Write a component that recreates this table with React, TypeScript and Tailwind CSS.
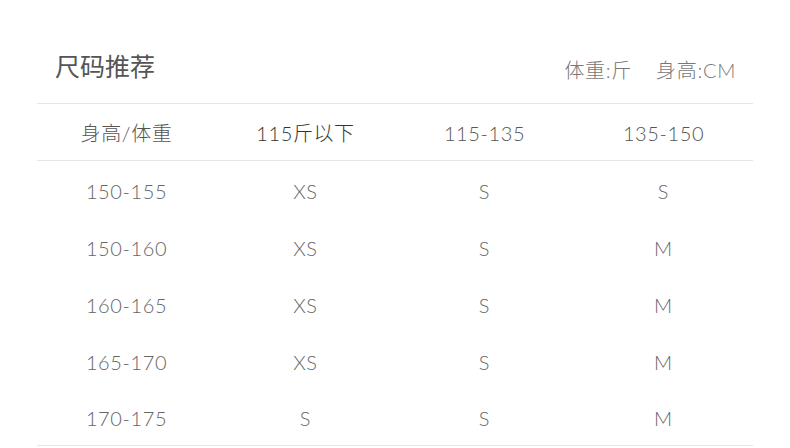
import React from 'react';

const rows = [
  ['150-155', 'XS', 'S', 'S'],
  ['150-160', 'XS', 'S', 'M'],
  ['160-165', 'XS', 'S', 'M'],
  ['165-170', 'XS', 'S', 'M'],
  ['170-175', 'S', 'S', 'M'],
];

const font = { fontFamily: '"Lato", "Noto Sans CJK SC", sans-serif' };

const App: React.FC = () => {
  return (
    <div className="w-[790px] h-[448px] bg-white overflow-hidden" style={font}>
      <div className="mx-[37px]">
        {/* Title */}
        <div className="h-[103px] flex justify-between items-start">
          <h1 className="ml-[18px] mt-[49px] text-[25px] leading-[34px] text-[#555] font-normal">尺码推荐</h1>
          <div className="mr-[17px] mt-[56px] text-[20px] leading-[28px] text-[#777] font-light tracking-[0.7px] flex gap-[24px]">
            <span>体重:斤</span>
            <span>身高:CM</span>
          </div>
        </div>

        {/* Table */}
        <div className="grid grid-cols-4 h-[58px] pt-[2px] border-y border-[#e6e6e6] items-center text-center text-[20px] font-light tracking-[0.6px]">
          <div className="text-[#555]">身高/体重</div>
          <div className="text-[#333]">115斤以下</div>
          <div className="text-[#555]">115-135</div>
          <div className="text-[#555]">135-150</div>
        </div>
        {rows.map((r, i) => (
          <div
            key={i}
            className={`grid grid-cols-4 h-[57px] pt-[2px] items-center text-center text-[20px] tracking-[0.6px] text-[#666] font-light ${i === rows.length - 1 ? 'border-b border-[#e6e6e6]' : ''}`}
          >
            {r.map((c, j) => (
              <div key={j}>{c}</div>
            ))}
          </div>
        ))}
      </div>
    </div>
  );
};

export default App;
